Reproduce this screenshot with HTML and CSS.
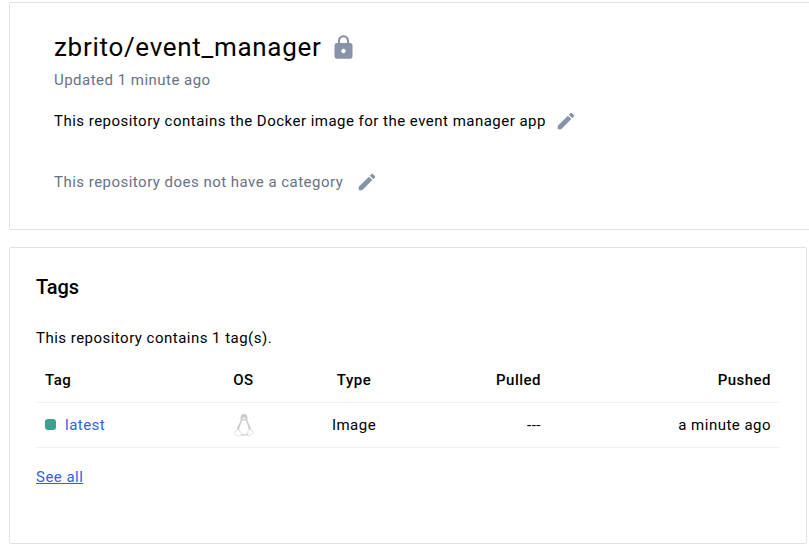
FILE: index.html
```html
<!DOCTYPE html>
<html lang="en">
<head>
<meta charset="utf-8">
<title>zbrito/event_manager</title>
<link rel="stylesheet" href="styles.css">
</head>
<body>
<section class="card header">
  <div class="line title"><h1>zbrito/event_manager</h1>
    <svg class="lock" viewBox="0 0 24 24"><path d="M18 8h-1V6c0-2.760-2.240-5-5-5S7 3.240 7 6v2H6c-1.100 0-2 .9-2 2v10c0 1.100.9 2 2 2h12c1.100 0 2-.9 2-2V10c0-1.100-.9-2-2-2zm-6 9c-1.100 0-2-.9-2-2s.9-2 2-2 2 .9 2 2-.9 2-2 2zm3.100-9H8.900V6c0-1.710 1.390-3.100 3.100-3.100s3.100 1.390 3.100 3.100v2z"/></svg>
  </div>
  <p class="updated muted">Updated 1 minute ago</p>
  <div class="line description"><span>This repository contains the Docker image for the event manager app</span>
    <svg class="pencil" viewBox="0 0 24 24"><path d="M3 17.250V21h3.750L17.810 9.940l-3.750-3.750L3 17.250zM20.710 7.040a1 1 0 0 0 0-1.410l-2.340-2.340a1 1 0 0 0-1.410 0l-1.830 1.830 3.750 3.750 1.830-1.830z"/></svg>
  </div>
  <div class="line category muted"><span>This repository does not have a category</span>
    <svg class="pencil" viewBox="0 0 24 24"><path d="M3 17.250V21h3.750L17.810 9.940l-3.750-3.750L3 17.250zM20.710 7.040a1 1 0 0 0 0-1.410l-2.340-2.340a1 1 0 0 0-1.410 0l-1.830 1.830 3.750 3.750 1.830-1.830z"/></svg>
  </div>
</section>
<section class="card tags">
  <h2>Tags</h2>
  <p class="count">This repository contains 1 tag(s).</p>
  <table>
    <colgroup><col class="c-tag"><col class="c-os"><col class="c-type"><col class="c-pulled"><col></colgroup>
    <thead><tr><th>Tag</th><th class="center">OS</th><th class="center">Type</th><th class="right">Pulled</th><th class="right">Pushed</th></tr></thead>
    <tbody><tr>
      <td><div class="tag"><span class="status"></span><a href="#">latest</a></div></td>
      <td class="center"><svg class="linux" viewBox="0 0 20 24"><path class="body" d="M6.500 6.500C6.500 10 3 12.500 3 17L6 22.500h8l3-5.500c0-4.500-3.500-7-3.500-10.500V4.500c0-5-7-5-7 0z"/><path class="belly" d="M8 7.500C7.500 11 4.800 14 5.200 18l2.300 3.200h5l2.300-3.200c.4-4-2.300-7-2.800-10.500z"/><path class="foot" d="M3.500 16.500c1.200-.5 2 1 3 2.500 1.500 2 1 4-1 4-1.500 0-3-.7-4.300-1.200-1.200-.6-.4-1.600-.4-2.500C.8 17.500 2.500 17.500 3.500 16.500zM16.500 16.500c-1.200-.5-2.500 0-2.500 2s-1 4.500.7 4.500c1.800 0 2.200-1.700 3.800-2.400 1.300-.7.7-1.200.1-2C18 17.500 18 16.800 16.500 16.500z"/><path class="foot" d="M8 5.500l2-1 2 1-2 1.500z"/></svg></td>
      <td class="center">Image</td><td class="right">---</td><td class="right">a minute ago</td>
    </tr></tbody>
  </table>
  <a class="all" href="#">See all</a>
</section>
</body>
</html>
```
FILE: styles.css
```css
* { box-sizing: border-box; }
body { margin: 0; padding: 2px 2px 0 9px; height: 549px; overflow: hidden; background: #fff; color: #000; font: 15px/20px Roboto, sans-serif; letter-spacing: .48px; }
h1, h2, p { margin: 0; }
.card { border: 1px solid #e1e2e6; border-radius: 2px; background: #fff; }
.header { width: 820px; height: 228px; padding: 26px 44px; }
.line { display: flex; align-items: center; }
.title { height: 36px; gap: 8px; }
h1 { font-size: 26px; font-weight: 400; line-height: 36px; letter-spacing: .7px; }
.lock { width: 27px; height: 27px; fill: #8993a8; }
.pencil { width: 22px; height: 22px; fill: #8993a8; }
.updated { margin-top: 5px; }
.muted { color: #677285; }
.description { margin-top: 20px; gap: 9px; }
.category { margin-top: 39px; gap: 13px; }
.tags { width: 798px; height: 297px; margin-top: 17px; padding: 25px 26px; }
h2 { font-size: 20px; font-weight: 500; line-height: 28px; letter-spacing: -.1px; }
.count { margin-top: 27px; }
table { width: 744px; margin-top: 10px; border-collapse: collapse; table-layout: fixed; }
th, td { height: 45px; padding: 0 9px; border-bottom: 1px solid #f0f1f3; text-align: left; font-weight: 400; }
th { height: 44px; padding-top: 1px; font-weight: 500; }
.center { text-align: center; }
.right { text-align: right; }
.c-tag { width: 156px; }
.c-os { width: 103px; }
.c-type { width: 118px; }
.c-pulled { width: 137px; }
.tag { display: flex; align-items: center; gap: 9px; }
.status { width: 11px; height: 11px; border-radius: 3px; background: #3ba08d; }
a { color: #2f5fe8; text-decoration: none; }
.linux { display: block; width: 20px; height: 24px; margin: auto; }
.body { fill: #cdcdcd; }
.belly { fill: #fff; }
.foot { fill: #fff; stroke: #d4d4d4; stroke-width: .7; }
.all { display: inline-block; margin-top: 19px; text-decoration: underline; }
```
